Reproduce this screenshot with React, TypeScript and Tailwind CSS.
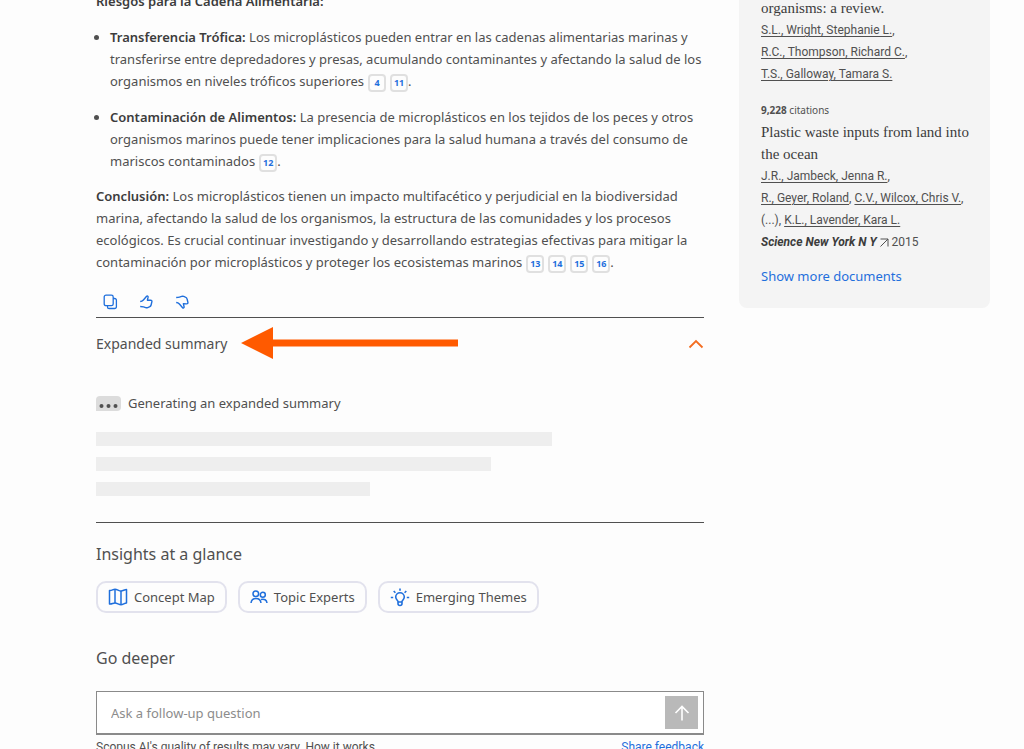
import { useState } from 'react';
import type { ReactNode } from 'react';

const suggestions = [
  { label: 'Concept Map', icon: <MapIcon /> },
  { label: 'Topic Experts', icon: <PeopleIcon /> },
  { label: 'Emerging Themes', icon: <BulbIcon /> },
];

function MapIcon() {
  return (
    <svg width="20" height="18" viewBox="0 0 20 18" fill="none" stroke="currentColor" strokeWidth="1.5" strokeLinejoin="round">
      <path d="M1.5 2.500C3.500 3 5 1.200 7 1.200s4 1.800 6 1.800 3.500-1.500 5.500-1.500V15c-2 0-3.500 1.800-5.500 1.800S9 15 7 15s-3.500 1.500-5.500 1z" />
      <path d="M7 1.200V15M13 3v13.800" />
    </svg>
  );
}

function PeopleIcon() {
  return (
    <svg width="18" height="14" viewBox="0 0 18 14" fill="none" stroke="currentColor" strokeWidth="1.5">
      <circle cx="5.800" cy="3.800" r="2.800" />
      <circle cx="12.800" cy="4.800" r="2.500" />
      <path d="M1 13c.3-3 2.200-4.500 5-4.500s4.700 1.500 5 4.500M11 9.500c3.300-1 5.700.5 6 3.500" />
    </svg>
  );
}

function BulbIcon() {
  return (
    <svg width="20" height="19" viewBox="0 0 20 19" fill="none" stroke="currentColor" strokeWidth="1.600">
      <path d="M8 13.500c0-1-2.300-2-2.300-4.400a4.300 4.300 0 0 1 8.600 0c0 2.400-2.300 3.400-2.300 4.400v2a2 2 0 0 1-4 0z" />
      <path d="M8 14h4M10 .5v2.200M3.700 3l1.700 1.700M16.300 3l-1.700 1.700M.8 9.500h2.400M16.800 9.500h2.400" />
    </svg>
  );
}

function CopyIcon() {
  return (
    <svg width="16" height="16" viewBox="0 0 16 16" fill="none" stroke="currentColor" strokeWidth="1.300">
      <rect x="2.200" y="1.200" width="9" height="10.500" rx="1.800" />
      <path d="M5.500 11.700v1.200a1.600 1.600 0 0 0 1.600 1.600h5.500a1.800 1.800 0 0 0 1.800-1.800V6.300a1.800 1.800 0 0 0-1.800-1.800h-1.400" />
    </svg>
  );
}

function ThumbIcon({ down = false }: { down?: boolean }) {
  return (
    <svg
      width="16"
      height="16"
      viewBox="0 0 16 16"
      fill="none"
      stroke="currentColor"
      strokeWidth="1.400"
      strokeLinejoin="round"
      className={down ? '-scale-y-100' : ''}
    >
      <path d="M2.200 7.500c1.600 0 2.300-.5 3.200-1.500L8.600 2.300c.6-.6 1.700-.1 1.500.9l-.7 3 3.300-.1c.9 0 1.400.7 1.200 1.600l-.8 3.300c-.2 1-.8 1.600-1.700 1.900l-1.700.7c-.7.2-1.300.2-2 0l-2.200-.7c-1-.3-1.900-.4-3.300-.4" />
    </svg>
  );
}

function Cite({ n }: { n: number }) {
  return (
    <a
      href="#"
      className="ml-1 inline-flex h-[18px] w-[18px] items-center justify-center rounded border-2 border-[#e0e0e0] align-middle text-[9px] font-bold text-[#1f6fdc]"
    >
      {n}
    </a>
  );
}

function Author({ children }: { children: ReactNode }) {
  return (
    <a href="#" className="whitespace-nowrap underline underline-offset-2">
      {children}
    </a>
  );
}

export default function App() {
  const [expanded, setExpanded] = useState(true);
  const [question, setQuestion] = useState('');

  return (
    <div className="flex h-screen items-start gap-[35px] overflow-hidden bg-[#fdfdfd] pr-[34px] pl-24 font-['Noto_Sans',sans-serif] text-[13px] leading-[22px] text-[#505050]">
      <main className="-mt-2.5 min-w-0 flex-1">
        <h3 className="font-semibold text-[#3c3c3c]">Riesgos para la Cadena Alimentaria:</h3>
        <ul className="mt-3.5 list-disc space-y-3.5 pl-3.5">
          <li>
            <strong className="font-semibold text-[#3c3c3c]">Transferencia Trófica:</strong> Los microplásticos pueden
            entrar en las cadenas alimentarias marinas y transferirse entre depredadores y presas, acumulando
            contaminantes y afectando la salud de los organismos en niveles tróficos superiores
            <Cite n={4} />
            <Cite n={11} />.
          </li>
          <li>
            <strong className="font-semibold text-[#3c3c3c]">Contaminación de Alimentos:</strong> La presencia de
            microplásticos en los tejidos de los peces y otros organismos marinos puede tener implicaciones para la
            salud humana a través del consumo de mariscos contaminados
            <Cite n={12} />.
          </li>
        </ul>
        <p className="mt-[13px]">
          <strong className="font-semibold text-[#3c3c3c]">Conclusión:</strong> Los microplásticos tienen un impacto
          multifacético y perjudicial en la biodiversidad marina, afectando la salud de los organismos, la estructura de
          las comunidades y los procesos ecológicos. Es crucial continuar investigando y desarrollando estrategias
          efectivas para mitigar la contaminación por microplásticos y proteger los ecosistemas marinos
          <Cite n={13} />
          <Cite n={14} />
          <Cite n={15} />
          <Cite n={16} />.
        </p>

        <div className="mt-[15px] flex gap-2 pb-px text-[#1f6fdc]">
          <button type="button" aria-label="Copy" className="flex h-7 w-7 items-center justify-center">
            <CopyIcon />
          </button>
          <button type="button" aria-label="Like" className="flex h-7 w-7 items-center justify-center">
            <ThumbIcon />
          </button>
          <button type="button" aria-label="Dislike" className="flex h-7 w-7 items-center justify-center">
            <ThumbIcon down />
          </button>
        </div>

        <section className="border-y border-[#505050]">
          <button
            type="button"
            onClick={() => setExpanded(!expanded)}
            aria-expanded={expanded}
            className="relative flex w-full items-center justify-between py-[15px] text-left text-sm leading-[22px]"
          >
            Expanded summary
            <svg width="217" height="32" viewBox="0 0 217 32" fill="#ff5a00" className="absolute top-[9px] left-[145px]">
              <path d="M0 16 32 0v12.500h185v7H32V32z" />
            </svg>
            <svg width="16" height="10" viewBox="0 0 16 10" fill="none" stroke="#f36d21" strokeWidth="1.800">
              <path d="M1.500 8.500 8 2l6.500 6.500" />
            </svg>
          </button>
          {expanded && (
            <div className="pt-[22px] pb-[26px]">
              <div className="flex items-center gap-[7px]">
                <svg width="25" height="15" viewBox="0 0 25 15">
                  <path d="M4 0h17a4 4 0 0 1 4 4v7a4 4 0 0 1-4 4H0V4a4 4 0 0 1 4-4z" fill="#dcdcdc" />
                  <g fill="#505050">
                    <circle cx="5.500" cy="10" r="2" />
                    <circle cx="12.500" cy="10" r="2" />
                    <circle cx="19.500" cy="10" r="2" />
                  </g>
                </svg>
                Generating an expanded summary
              </div>
              <div className="mt-[18px] space-y-[11px]">
                <div className="h-3.5 w-3/4 bg-[#eeeeee]" />
                <div className="h-3.5 w-[65%] bg-[#eeeeee]" />
                <div className="h-3.5 w-[45%] bg-[#eeeeee]" />
              </div>
            </div>
          )}
        </section>

        <h2 className="mt-5 text-base leading-[22px]">Insights at a glance</h2>
        <div className="mt-4 flex gap-[11px]">
          {suggestions.map(({ label, icon }) => (
            <button
              key={label}
              type="button"
              className="flex h-8 items-center gap-1.5 rounded-[10px] border-2 border-[#e2e2ed] px-2.5 whitespace-nowrap"
            >
              <span className="text-[#1f6fdc]">{icon}</span>
              {label}
            </button>
          ))}
        </div>

        <h2 className="mt-[34px] text-base leading-[22px]">Go deeper</h2>
        <form
          onSubmit={(e) => e.preventDefault()}
          className="mt-[22px] flex h-11 items-center border border-b-2 border-[#8a8a8a] bg-white pr-[5px] pl-3.5"
        >
          <input
            type="text"
            aria-label="Ask a follow-up question"
            value={question}
            onChange={(e) => setQuestion(e.target.value)}
            placeholder="Ask a follow-up question"
            className="min-w-0 flex-1 outline-none placeholder:text-[#8c8c8c]"
          />
          <button type="submit" aria-label="Send" className="flex h-[33px] w-[33px] items-center justify-center bg-[#b9b9b9]">
            <svg width="16" height="16" viewBox="0 0 16 16" fill="none" stroke="white" strokeWidth="1.600">
              <path d="M8 15.500V1.500M1.500 8 8 1.500 14.500 8" />
            </svg>
          </button>
        </form>
        <div className="flex justify-between pt-px font-['Roboto',sans-serif] text-xs leading-[22px]">
          <span>
            Scopus AI's quality of results may vary. <a href="#">How it works</a>
          </span>
          <a href="#" className="text-[#1f6fdc]">
            Share feedback
          </a>
        </div>
      </main>

      <aside className="-mt-2.5 w-[251px] shrink-0 rounded-b-lg bg-[#f4f4f4] pt-[7px] pr-4 pb-[21px] pl-[22px] font-['Roboto',sans-serif] text-xs leading-[22px]">
        <h4 className="font-['Liberation_Serif',serif] text-[15px] leading-[22px] text-[#3c3c3c]">
          organisms: a review.
        </h4>
        <p>
          <Author>S.L., Wright, Stephanie L.</Author>,
          <br />
          <Author>R.C., Thompson, Richard C.</Author>,
          <br />
          <Author>T.S., Galloway, Tamara S.</Author>
        </p>
        <p className="mt-3.5 font-['Noto_Sans',sans-serif] text-[10px] leading-[22px]">
          <strong>9,228</strong> citations
        </p>
        <h4 className="font-['Liberation_Serif',serif] text-[15px] leading-[22px] text-[#3c3c3c]">
          Plastic waste inputs from land into the ocean
        </h4>
        <p>
          <Author>J.R., Jambeck, Jenna R.</Author>,
          <br />
          <Author>R., Geyer, Roland</Author>, <Author>C.V., Wilcox, Chris V.</Author>,
          <br />
          (...), <Author>K.L., Lavender, Kara L.</Author>
        </p>
        <p>
          <strong className="text-[#3c3c3c] italic">Science New York N Y</strong>{' '}
          <svg width="9" height="9" viewBox="0 0 9 9" fill="none" stroke="currentColor" className="inline">
            <path d="M.5 1h7.500v7.500M8 1 .5 8.500" />
          </svg>{' '}
          2015
        </p>
        <a
          href="#"
          className="mt-3 block font-['Noto_Sans',sans-serif] text-[13px] leading-[22px] text-[#1f6fdc]"
        >
          Show more documents
        </a>
      </aside>
    </div>
  );
}
